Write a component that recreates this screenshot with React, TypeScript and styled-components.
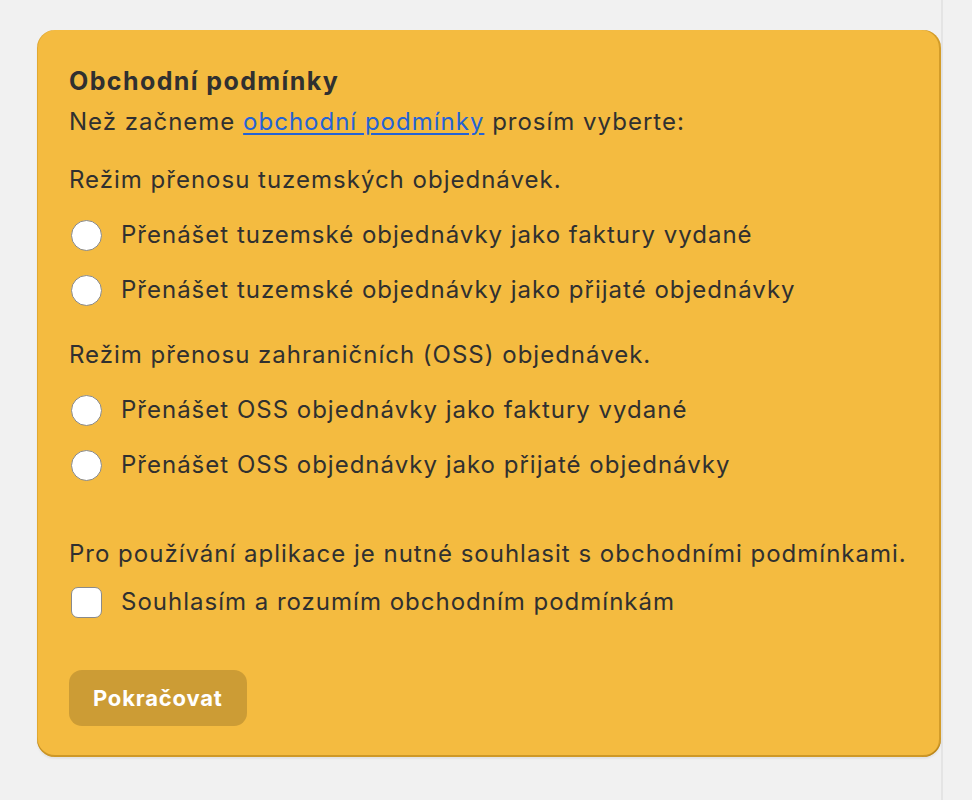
import React from "react";
import styled, { createGlobalStyle } from "styled-components";

const GlobalStyle = createGlobalStyle`
  html, body {
    margin: 0;
    padding: 0;
    background: #f1f1f1;
    font-family: Inter, "Noto Sans", "Liberation Sans", sans-serif;
    color: #303030;
  }
`;

const Page = styled.div`
  display: flex;
  min-height: 800px;
  overflow: hidden;
`;

const Main = styled.main`
  width: 904px;
  flex: 0 0 auto;
  padding: 30px 0 0 37px;
  border-right: 2px solid #e4e4e4;
`;

const Card = styled.section`
  background: #f4bb40;
  border-radius: 18px;
  padding: 35px 32px 31px;
  box-shadow:
    inset -2px 0 0 0 rgba(150, 100, 0, 0.35),
    inset 0 -2px 0 0 rgba(150, 100, 0, 0.4),
    inset 1px 0 0 0 rgba(150, 100, 0, 0.2),
    0 2px 2px rgba(0, 0, 0, 0.06);
`;

const Title = styled.h2`
  margin: 0;
  font-size: 25px;
  line-height: 32px;
  letter-spacing: 1.4px;
  font-weight: 650;
`;

const Text = styled.p<{ $top?: number }>`
  margin: ${(p) => p.$top ?? 0}px 0 0;
  font-size: 24px;
  line-height: 32px;
  letter-spacing: 1px;
  font-weight: 400;
`;

const Link = styled.a`
  color: #2463d6;
  text-decoration: underline;
  text-underline-offset: 3px;
`;

const Options = styled.div<{ $top: number }>`
  display: flex;
  flex-direction: column;
  gap: 15px;
  margin-top: ${(p) => p.$top}px;
`;

const Option = styled.label`
  display: flex;
  align-items: center;
  gap: 19px;
  height: 40px;
  padding-left: 2px;
  font-size: 24px;
  line-height: 32px;
  letter-spacing: 1px;
  cursor: pointer;
`;

const Radio = styled.input.attrs({ type: "radio" })`
  appearance: none;
  margin: 0;
  width: 31px;
  height: 31px;
  border-radius: 50%;
  background: #fff;
  border: 1px solid #8a8a8a;
  flex: 0 0 auto;
`;

const Checkbox = styled.input.attrs({ type: "checkbox" })`
  appearance: none;
  margin: 0;
  width: 31px;
  height: 31px;
  border-radius: 7px;
  background: #fff;
  border: 1px solid #8a8a8a;
  flex: 0 0 auto;
`;

const Button = styled.button`
  margin-top: 48px;
  height: 56px;
  padding: 0 24px;
  border: none;
  border-radius: 13px;
  background: #cc9c35;
  color: #fff;
  font-family: inherit;
  font-size: 22px;
  letter-spacing: 0.8px;
  font-weight: 650;
  cursor: pointer;
`;

export default function App() {
  return (
    <>
      <GlobalStyle />
      <Page>
        <Main>
          <Card>
            <Title>Obchodní podmínky</Title>
            <Text $top={9}>
              Než začneme <Link href="#">obchodní podmínky</Link> prosím vyberte:
            </Text>

            <Text $top={26}>Režim přenosu tuzemských objednávek.</Text>
            <Options $top={19}>
              <Option>
                <Radio name="domestic" />
                Přenášet tuzemské objednávky jako faktury vydané
              </Option>
              <Option>
                <Radio name="domestic" />
                Přenášet tuzemské objednávky jako přijaté objednávky
              </Option>
            </Options>

            <Text $top={29}>Režim přenosu zahraničních (OSS) objednávek.</Text>
            <Options $top={19}>
              <Option>
                <Radio name="oss" />
                Přenášet OSS objednávky jako faktury vydané
              </Option>
              <Option>
                <Radio name="oss" />
                Přenášet OSS objednávky jako přijaté objednávky
              </Option>
            </Options>

            <Text $top={53}>
              Pro používání aplikace je nutné souhlasit s obchodními podmínkami.
            </Text>
            <Options $top={12}>
              <Option>
                <Checkbox />
                Souhlasím a rozumím obchodním podmínkám
              </Option>
            </Options>

            <Button>Pokračovat</Button>
          </Card>
        </Main>
      </Page>
    </>
  );
}
